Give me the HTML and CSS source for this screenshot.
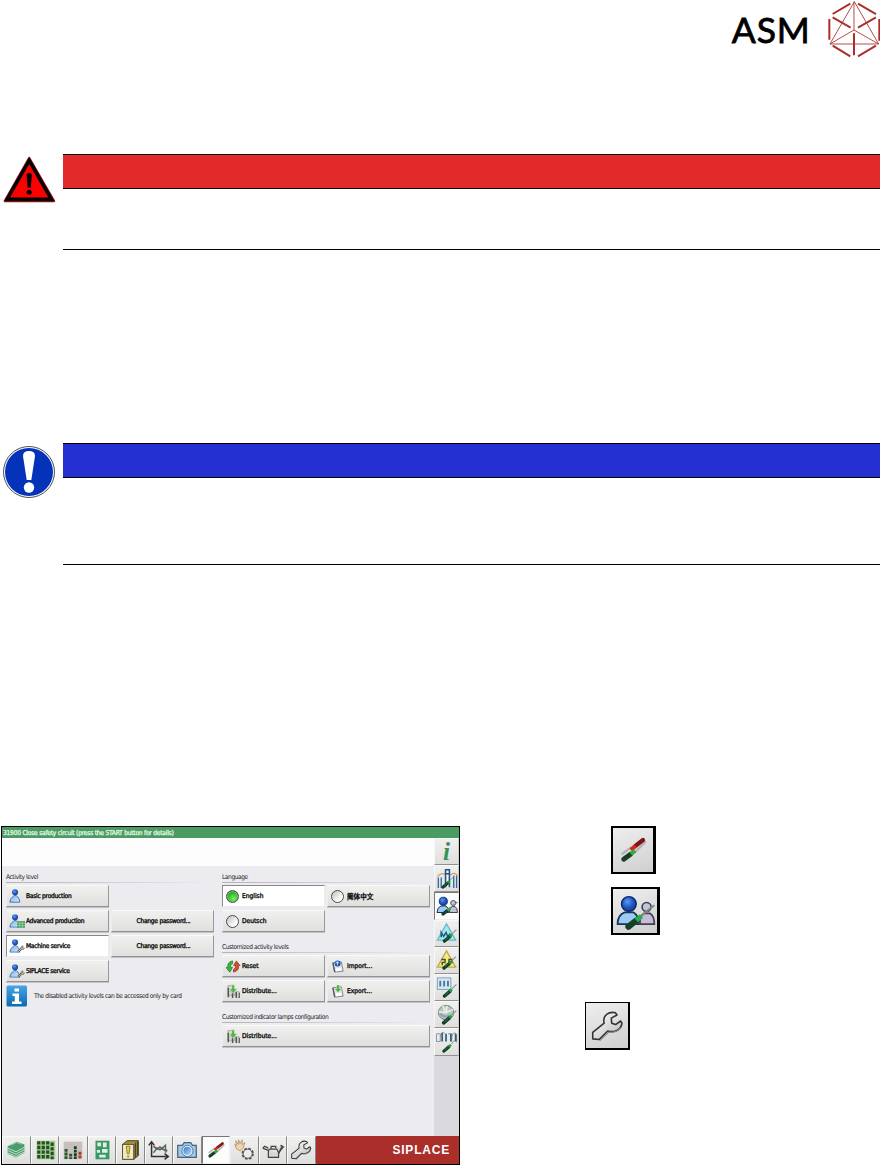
FILE: index.html
```html
<!DOCTYPE html>
<html lang="en">
<head>
    <meta charset="UTF-8">
    <meta name="viewport" content="width=device-width, initial-scale=1.0">
    <title>SIPLACE</title>
    <link rel="stylesheet" href="styles.css">
</head>
<body>
    <!-- shared icons -->
    <svg class="sprite">
        <defs>
            <radialGradient id="ball" cx=".4" cy=".35" r=".65"><stop offset="0" stop-color="#5c9cf5"/><stop offset=".5" stop-color="#2461cc"/><stop offset="1" stop-color="#153c82"/></radialGradient>
            <linearGradient id="coat" x1="0" y1="0" x2="1" y2="1"><stop offset="0" stop-color="#79aee3"/><stop offset="1" stop-color="#dceaff"/></linearGradient>
            <linearGradient id="lens" x1="0" y1="0" x2="1" y2="1"><stop offset="0" stop-color="#3a78c6"/><stop offset="1" stop-color="#b4dcff"/></linearGradient>
            <linearGradient id="blueBox" x1="0" y1="0" x2="0" y2="1"><stop offset="0" stop-color="#48a4e2"/><stop offset="1" stop-color="#096bb4"/></linearGradient>
            <linearGradient id="metal" x1="0" y1="0" x2="1" y2="1"><stop offset="0" stop-color="#fff"/><stop offset="1" stop-color="#b9b9b7"/></linearGradient>
        </defs>
        <symbol id="user" viewBox="0 0 14 12">
            <path d="M.8 11.4Q.8 8.5 3 7L4.5 5.5H6.3L7.8 7Q9.4 8.5 9.4 11.4Z" fill="url(#coat)" stroke="#356caf" stroke-width=".8"/>
            <circle cx="5.3" cy="2.8" r="2.6" fill="url(#ball)"/>
        </symbol>
        <symbol id="driver" viewBox="0 0 14 14">
            <path d="M9 5L13.3 .8" stroke="#8b8f90" stroke-width="1"/>
            <path d="M1.8 12L7 7.5" stroke="#123c26" stroke-width="3.3" stroke-linecap="round"/>
            <path d="M2.5 11L6 8" stroke="#2b694a" stroke-width="1"/>
            <path d="M6.8 7.6L9 5.5" stroke="#19a92f" stroke-width="2.4"/>
        </symbol>
        <symbol id="drivers" viewBox="0 0 28 28">
            <path d="M6 17L13 12M15 16L23 8" stroke="#b4b4b4" stroke-width="1.6"/>
            <path d="M15.5 11.3L21 7" stroke="#7e1515" stroke-width="3" stroke-linecap="round"/>
            <path d="M12.5 14L15.8 11" stroke="#d5251c" stroke-width="2.8"/>
            <path d="M7.5 20.5L12.5 16.8" stroke="#183f26" stroke-width="3.4" stroke-linecap="round"/>
            <path d="M12.5 16.8L15.5 14.5" stroke="#23b43d" stroke-width="2.8"/>
        </symbol>
        <symbol id="users" viewBox="0 0 24 24">
            <path d="M2 19Q2 14 6 12.5H11Q14 14.5 14 19Z" fill="#9bcbf5" stroke="#1b3654"/>
            <path d="M14.5 19Q14 14.5 17 13H20Q22.5 14.5 22.5 19Z" fill="#c6bddb" stroke="#454050"/>
            <circle cx="8.3" cy="7.8" r="4.1" fill="url(#ball)" stroke="#0b2770" stroke-width=".8"/>
            <circle cx="18.2" cy="9.5" r="2.5" fill="#c3c3dc" stroke="#3d4050" stroke-width=".9"/>
            <path d="M15 14.5L22.5 8.5" stroke="#798a85" stroke-width="1.2"/>
            <path d="M8 20.5L12.5 17" stroke="#154028" stroke-width="3.4" stroke-linecap="round"/>
            <path d="M12.5 17L15.3 14.5" stroke="#27ad44" stroke-width="2.7"/>
        </symbol>
        <symbol id="wrench" viewBox="0 0 28 28">
            <path d="M4 18.5L12 12Q11 8 14 5.7Q16.5 3.8 20 4.8L21 6.3L17 8.5L17.3 12L20 13L23.5 10.5L24.5 12Q24 16 20.5 17.3Q17.5 18.5 14.5 17.5L8.5 23.5L4 23Z" fill="url(#metal)" stroke="#333" stroke-width="1.1" stroke-linejoin="round"/>
            <path d="M9 24.2L15 18.4Q21 19 24 15" fill="none" stroke="#8a8a8a" stroke-width=".8"/>
        </symbol>
        <symbol id="spread" viewBox="0 0 16 16">
            <path d="M2 2L8 1L10 12H2Z" fill="#d9dfd6" stroke="#777" stroke-width=".6"/>
            <path d="M2.5 4V14M7 8V15M11 8V15M14 9V15" stroke="#555" stroke-width="1.6"/>
            <path d="M3 8H14M9 8V13M13 9V14" stroke="#b4b9bd" stroke-width="1.2"/>
            <path d="M6 1H9V5H12L7.6 10L3.5 5H6Z" fill="#58b349" stroke="#ddedd6" stroke-width=".6"/>
        </symbol>
        <symbol id="disk" viewBox="0 0 14 14">
            <path d="M2 3L11 2L13 12L4 13Z" fill="#dfe5ea" stroke="#65717b" stroke-width=".8"/>
            <path d="M2 3L4 13" stroke="#4d5962" stroke-width="1.4"/>
            <path d="M5 9L11 8.3V11L5.5 12Z" fill="#fff"/>
        </symbol>
        <symbol id="tinyWrench" viewBox="0 0 8 8">
            <path d="M1 7L4.5 3.7" stroke="#555" stroke-width="2.2"/>
            <path d="M4 4Q3.5 1.5 6 1L5.5 3L7.5 3.4Q6.5 5.6 4 4Z" fill="#ddd" stroke="#555" stroke-width=".7"/>
            <path d="M1.2 6.8L4.5 3.8" stroke="currentColor"/>
        </symbol>
    </svg>

    <header class="page-header">
        <span class="brand">ASM</span>
        <svg class="brand-mark" viewBox="320 0 160 180" fill="none" stroke="#aa2f2b">
            <path stroke-width="6" d="M337 42L390 11M413 11L467 42M327 57V119M477 57V122M337 137L390 169M413 169L467 137M401 100V166M337 52L391 83M413 83L467 52"/>
            <path stroke-width="2.6" d="M402 5L329 132H475ZM401 90V5M401 90L329 132M401 90L475 132"/>
        </svg>
    </header>

    <div class="notice warning">
        <svg class="notice-icon" viewBox="0 0 54 48">
            <path d="M26.2 3L51 46H1.8Z" fill="#000" stroke="#8d0d13" stroke-width="2.4" stroke-linejoin="round"/>
            <path d="M26.2 3.2L50.3 45.4H2.2Z" fill="#000" stroke="#000" stroke-linejoin="round"/>
            <path d="M26.2 9L45.3 42.6H7.1Z" fill="#f00"/>
            <path d="M23.5 19.5Q26.2 16 28.9 19.5L27.8 32.8H24.6Z"/><circle cx="26.2" cy="37.2" r="2.5"/>
        </svg>
        <div class="notice-body">
            <div class="notice-bar"></div>
        </div>
    </div>

    <div class="notice mandatory">
        <svg class="notice-icon" viewBox="0 0 54 54">
            <circle cx="26" cy="27" r="25.5" fill="#fff" stroke="#343c48" stroke-width=".9"/>
            <circle cx="26" cy="27" r="24" fill="#0432b8"/>
            <path d="M20 11Q20 6 26 6Q32 6 32 11L28.3 35H23.7Z" fill="#fff"/><circle cx="26" cy="42.5" r="5.2" fill="#fff"/>
        </svg>
        <div class="notice-body">
            <div class="notice-bar"></div>
        </div>
    </div>

    <div class="station-row">
        <div class="screen">
            <div class="status"><span>31900 Close safety circuit (press the START button for details)</span></div>
            <div class="middle">
                <div class="main">
                    <div class="message"></div>
                    <div class="columns">
                        <div class="group">
                            <h3>Activity level</h3>
                            <div class="grid levels">
                                <button><svg class="ico"><use href="#user"/></svg><span>Basic production</span></button>
                                <div></div>
                                <button><svg class="ico" viewBox="0 0 14 12"><use href="#user"/><path d="M7 6H14V12H7Z" fill="#54a26b"/><path d="M7 8H14M7 10H14M9.3 6V12M11.7 6V12" stroke="#a4d9af" stroke-width=".5"/></svg><span>Advanced production</span></button>
                                <button class="center"><span>Change password...</span></button>
                                <button class="pressed"><svg class="ico" viewBox="0 0 14 12"><use href="#user"/><use class="grey-tool" href="#tinyWrench" x="7" y="5" width="7" height="7"/></svg><span>Machine service</span></button>
                                <button class="center"><span>Change password...</span></button>
                                <button><svg class="ico" viewBox="0 0 14 12"><use href="#user"/><use class="gold-tool" href="#tinyWrench" x="7" y="5" width="7" height="7"/></svg><span>SIPLACE service</span></button>
                            </div>
                            <div class="hint">
                                <svg viewBox="0 0 22 22">
                                    <rect x=".5" y=".5" width="20.5" height="21" rx="1.5" fill="url(#blueBox)"/>
                                    <path d="M8.5 3.5H13V6.5H8.5ZM6.5 8.5H13V16.5H15.5V19H6V16.5H8.8V11H6.5Z" fill="#fff"/>
                                </svg>
                                <span>The disabled activity levels can be accessed only by card</span>
                            </div>
                        </div>
                        <div class="group">
                            <h3>Language</h3>
                            <div class="grid">
                                <button class="pressed"><i class="radio on"></i><span>English</span></button>
                                <button><i class="radio"></i><span class="cjk">简体中文</span></button>
                                <button><i class="radio"></i><span>Deutsch</span></button>
                            </div>
                            <h3>Customized activity levels</h3>
                            <div class="grid">
                                <button><svg class="tool" viewBox="0 0 16 14"><path d="M7 1Q1 2 2 8L0 8L4 13L7 8H5Q4 5 7 4Z" fill="#35b83b" stroke="#196a1f" stroke-width=".7"/><path d="M8 13Q15 11 13 6L15 6L11 1L8 6H10Q11 9 8 10Z" fill="#d94a31" stroke="#80301e" stroke-width=".7"/></svg><span>Reset</span></button>
                                <button><svg class="tool" viewBox="0 0 16 14"><use href="#disk" width="14" height="14"/><circle cx="7" cy="3.7" r="3.2" fill="url(#ball)"/><path d="M7 6V2M5.5 3.5L7 2L8.5 3.5" stroke="#fff" fill="none" stroke-width=".7"/></svg><span>Import...</span></button>
                                <button><svg class="tool"><use href="#spread"/></svg><span>Distribute...</span></button>
                                <button><svg class="tool" viewBox="0 0 16 14"><use href="#disk" width="14" height="14"/><path d="M6 0H9V4H11.5L7.5 8L3.5 4H6Z" fill="#54ad45" stroke="#efe" stroke-width=".4"/></svg><span>Export...</span></button>
                            </div>
                            <h3>Customized indicator lamps configuration</h3>
                            <div class="grid">
                                <button class="wide"><svg class="tool"><use href="#spread"/></svg><span>Distribute...</span></button>
                            </div>
                        </div>
                    </div>
                </div>

                <nav class="side">
                    <button class="info">i</button>
                    <button><svg viewBox="0 0 24 26"><path d="M3 23V12M6 23V12M19 23V10M22 23V10" stroke="#36699c" stroke-width="1.4"/><path d="M2 11Q6 6 11 9H16Q20 6 23 10" fill="none" stroke="#d2a266" stroke-width="1.3"/><path d="M10.5 22V4H14.5V22M10.5 8H14.5" fill="#f3f7f7" stroke="#204e85" stroke-width="1.6"/><use href="#driver" x="6" y="10" width="14" height="14"/></svg></button>
                    <button class="pressed"><svg viewBox="0 0 24 24"><use href="#users"/></svg></button>
                    <button><svg viewBox="0 0 24 26"><path d="M11.5 3L21 20H2Z" fill="#a9e5f0" stroke="#64bbd1" stroke-width="1.3"/><path d="M6 17V12L8.5 16L11 12L13 17L15 13" fill="none" stroke="#1b5c79" stroke-width="1.6"/><use href="#driver" x="7" y="8" width="16" height="15"/></svg></button>
                    <button><svg viewBox="0 0 24 26"><path d="M11.5 3L21 20H2Z" fill="#f5e887" stroke="#baab44" stroke-width="1.3"/><path d="M6 12H10V15H7V18M14 18V12H17V15H14" fill="none" stroke="#534d29" stroke-width="1.5"/><use href="#driver" x="6" y="8" width="17" height="15"/></svg></button>
                    <button><svg viewBox="0 0 24 26"><path d="M2 3H16V15H2Z" fill="#d6e9f4" stroke="#7f9eb4"/><path d="M5 6V12M9 6V12M13 6V12" stroke="#477e9f" stroke-width="2"/><use href="#driver" x="7" y="9" width="16" height="15"/></svg></button>
                    <button><svg viewBox="0 0 24 26"><ellipse cx="11" cy="11" rx="8" ry="7.5" fill="#b8c0c2" stroke="#7a8484"/><path d="M3.5 10L10 11L8 4M12 4L11 11L18 8" fill="none" stroke="#e7ecdc" stroke-width="2"/><path d="M5 12Q9 17 15 14" fill="none" stroke="#88a3b1" stroke-width="2"/><use href="#driver" x="6" y="8" width="17" height="16"/></svg></button>
                    <button><svg viewBox="0 0 24 26"><path d="M1 5H5V13H1ZM5 8Q7 1 10 5M13 5H17V13M17 8Q19 1 22 6V14" fill="none" stroke="#8b9395"/><path d="M7 4V13M11 5V13M16 5V13M21 5V13" stroke="#345f80" stroke-width="1.8"/><use href="#driver" x="6" y="11" width="16" height="14"/></svg></button>
                </nav>
            </div>

            <footer class="toolbar">
                <button><svg viewBox="0 0 28 28"><path d="M5 10L15 5L23 8L14 13ZM5 10V18L14 22L23 17V8L14 13Z" fill="#4b9b6c"/><path d="M5 12L14 16L23 11M5 14.5L14 18.5L23 13.5M5 17L14 21L23 16" fill="none" stroke="#c6e8cf"/><path d="M8 9L15 6L20 8" fill="none" stroke="#8dccaa"/></svg></button>
                <button><svg viewBox="0 0 28 28"><rect x="5" y="4" width="20" height="20" fill="#a9c98c"/><path d="M7.3 4.5V24M12.1 4.5V24M16.9 4.5V24M21.7 6V24" stroke="#1d5226" stroke-width="3.4" stroke-dasharray="3.6 1.4"/></svg></button>
                <button><svg viewBox="0 0 28 28"><rect x="4" y="5" width="20" height="19" fill="#c6bfbb"/><path d="M6.5 13V23.6M11.5 18V23.6" stroke="#26552d" stroke-width="3.2" stroke-dasharray="3 .8"/><path d="M16.5 10V23.6" stroke="#123e1b" stroke-width="3" stroke-dasharray="3 .8"/><path d="M21.5 16V23.6" stroke="#a63c27" stroke-width="3.2" stroke-dasharray="3 .8"/></svg></button>
                <button><svg viewBox="0 0 28 28"><rect x="7" y="4" width="15" height="20" fill="#39976a"/><path d="M9 6H13V10H9ZM15 6H19V11H15ZM8.5 14H12V17H8.5ZM14 13H20V17H14ZM11 19H18V22H11Z" fill="#def2dc"/></svg></button>
                <button><svg viewBox="0 0 28 28"><path d="M6 8L11 4H23V20L18 24H6Z" fill="#a98a2c" stroke="#3c3825"/><path d="M18 8V24M20 6V22M22 5V20" stroke="#39382e"/><rect x="6" y="8" width="12" height="16" fill="#eee8c4" stroke="#59513a"/><path d="M10 10H14L13 18H11Z" fill="#e7d630" stroke="#57522c" stroke-width=".7"/><circle cx="12" cy="21" r="1.5" fill="#ccb524"/></svg></button>
                <button><svg viewBox="0 0 28 28" fill="none"><path d="M6 6V21H23M20 18L24 21L20 24M3 9L6 5L9 9" stroke="#303238" stroke-width="1.6"/><path d="M8 10L12 13L15 11L18 13L23 15" stroke="#8c5378" stroke-width="2"/><path d="M8 17L12 12L15 14L21 9V17" stroke="#397255" stroke-width="1.5"/></svg></button>
                <button><svg viewBox="0 0 28 28"><path d="M4 9H9L11 6H18L20 9H24V22H4Z" fill="#a3c9e9" stroke="#48627e" stroke-width="1.3"/><circle cx="14.5" cy="15" r="6" fill="#eef7ff" stroke="#49739c"/><circle cx="14.5" cy="15" r="4.4" fill="url(#lens)"/></svg></button>
                <button class="pressed"><svg viewBox="0 0 28 28"><use href="#drivers"/></svg></button>
                <button class="flat"><svg viewBox="0 0 28 28"><path d="M6 13L4 8L6 9L5 4L8 8L8 3L10 7L12 3V8L15 6L13 12L10 15Z" fill="#f2d3a7" stroke="#a38862" stroke-width=".8"/><circle cx="18" cy="18" r="5.6" fill="#ddd" stroke="#4b4b49" stroke-width="2" stroke-dasharray="2.6 1.8"/><circle cx="18" cy="18" r="4.9" fill="#ececea" stroke="#4c4c4c"/></svg></button>
                <button><svg viewBox="0 0 28 28"><path d="M3 12L9 14.5V22H20V17L25 11M9 14.5L11 13H18L20 17" fill="#d7d7d1" stroke="#42423f" stroke-width="1.3"/><path d="M3 12L5 10L9 12M12 13V10H17V12M20 18L24 9M22 9L26 11" fill="none" stroke="#454541" stroke-width="1.3"/></svg></button>
                <button><svg viewBox="0 0 28 28"><use href="#wrench"/></svg></button>
                <div class="product"><span>SIPLACE</span></div>
            </footer>
        </div>

        <div class="keys">
            <div class="key"><svg viewBox="0 0 28 28"><use href="#drivers"/></svg></div>
            <div class="key key-users"><svg viewBox="0 0 24 24"><use href="#users"/></svg></div>
            <div class="key key-wrench"><svg viewBox="0 0 28 28"><use href="#wrench"/></svg></div>
        </div>
    </div>
</body>
</html>
```

FILE: styles.css
```css
* {
    box-sizing: border-box;
}

body {
    margin: 0;
    width: 880px;
    height: 1165px;
    overflow: hidden;
    background: #fff;
    font-family: "DejaVu Sans Condensed", "DejaVu Sans", sans-serif;
}

svg {
    display: block;
    flex: none;
}

.sprite {
    width: 0;
    height: 0;
    float: left;
}

.page-header {
    display: flex;
    justify-content: flex-end;
    height: 154px;
}

.brand {
    width: 95px;
    padding-top: 9px;
    font: 35.5px/42px Lato, sans-serif;
    letter-spacing: .9px;
    -webkit-text-stroke: .8px #000;
}

.brand-mark {
    width: 53.3px;
    height: 60px;
}

.notice {
    display: grid;
    grid-template-columns: 63px 1fr;
}

.notice-icon {
    width: 54px;
    margin-left: 3px;
    margin-top: 1px;
}

.notice-body {
    height: 96px;
    border-top: 1px solid #000;
    border-bottom: 1px solid #000;
}

.notice-bar {
    height: 34px;
    background: #e32a2a;
    border-bottom: 1px solid #000;
}

.warning {
    height: 289px;
}

.mandatory {
    height: 383px;
}

.mandatory .notice-icon {
    margin-top: 2px;
}

.mandatory .notice-body {
    height: 122px;
}

.mandatory .notice-bar {
    background: #2430d2;
}

.station-row {
    display: flex;
    height: 339px;
    padding-left: 1px;
}

.screen {
    display: flex;
    flex-direction: column;
    width: 459px;
    height: 339px;
    border: 1px solid #000;
    background: #ececf0;
    color: #1c1c1c;
    font-size: 6.6px;
}

.status {
    height: 11px;
    padding-left: 1px;
    background: #4a9c62;
    color: #e6f6e8;
    line-height: 12px;
    white-space: nowrap;
    letter-spacing: -.22px;
    -webkit-text-stroke: .3px #e0f2e2;
}

.middle {
    display: flex;
    height: 298px;
}

.main {
    width: 432px;
}

.message {
    height: 28px;
    background: #fdfdfd;
}

.columns {
    display: grid;
    grid-template-columns: 208px 208px;
    gap: 8px;
    padding: 5px 4px 0;
}

.group h3 {
    height: 12px;
    margin: 0 0 2px;
    background: linear-gradient(90deg, #b3b3b7, #ececf0) bottom / 100% 1px no-repeat;
    font-size: 6.6px;
    font-weight: normal;
    line-height: 12px;
    letter-spacing: -.44px;
    white-space: nowrap;
}

.grid {
    display: grid;
    grid-template-columns: 103px 103px;
    grid-auto-rows: 22px;
    gap: 3px 2px;
}

.grid + h3 {
    margin-top: 9px;
}

button {
    display: flex;
    align-items: center;
    min-width: 0;
    margin: 0;
    padding: 0;
    border: 1px solid;
    border-color: #f9f9f9 #98989a #929294 #eee;
    background: linear-gradient(#f0f0ef, #dfdfde);
    color: #111;
    font: inherit;
}

.grid button {
    padding-left: 2px;
    border-right-width: 1.5px;
    box-shadow: 0 1px 0 #c3c3c5;
    white-space: nowrap;
    -webkit-text-stroke: .35px #111;
}

.levels button {
    letter-spacing: -.25px;
}

.grid .pressed {
    background: #fff;
    border-color: #888 #eee #eee #8c8c8c;
    box-shadow: none;
}

.grid .center {
    justify-content: center;
}

.wide {
    grid-column: span 2;
}

.ico {
    width: 16px;
    height: 14px;
    margin-right: 1px;
    -webkit-text-stroke: 0;
}

.tool {
    width: 15px;
    height: 15px;
    margin: 0 1px;
}

.grey-tool {
    color: #ccc;
}

.gold-tool {
    color: #d9b34c;
}

.radio {
    width: 13px;
    height: 13px;
    margin: 0 3px 0 1px;
    border: 1px solid #4c4c4c;
    border-radius: 50%;
    background: linear-gradient(135deg, #bebebe, #fff 75%);
}

.radio.on {
    background: radial-gradient(circle at 60% 70%, #72f84e, #15a41c 75%);
    box-shadow: inset 0 0 0 1px #7dbd79;
}

.cjk {
    font-family: "Noto Sans CJK SC", sans-serif;
    font-weight: 500;
}

.hint {
    display: flex;
    align-items: center;
    gap: 6px;
    margin-top: 3px;
    letter-spacing: -.4px;
    white-space: nowrap;
}

.hint svg {
    width: 22px;
    height: 22px;
}

.side {
    width: 25px;
    background: #dadade;
}

.side button {
    width: 25px;
    height: 27.2px;
    justify-content: center;
    border-color: #f8f8f8 #ccc #929294 #f7f7f7;
}

.side svg {
    width: 24px;
    height: 25px;
}

.side .pressed,
.toolbar .pressed {
    background: #fcfcfc;
    border-color: #777 #eee #eee #777;
}

.side .info {
    color: #35925a;
    font: italic bold 25px/24px "Liberation Serif", serif;
}

.toolbar {
    display: flex;
    height: 28px;
}

.toolbar button {
    flex: 0 0 28.55px;
    border-color: #f9f9f9 #888 #ddd #f9f9f9;
}

.toolbar .flat {
    border-left-color: #eee;
}

.toolbar svg {
    width: 26px;
    height: 26px;
}

.product {
    flex: 1;
    padding-right: 9px;
    background: #aa2e2a;
    color: #fff;
    font: bold 12px/28px "Liberation Sans", sans-serif;
    letter-spacing: .8px;
    text-align: right;
}

.keys {
    padding-left: 151px;
}

.key {
    display: flex;
    align-items: center;
    justify-content: center;
    width: 45px;
    height: 48px;
    border: 2px solid #000;
    border-right-width: 3px;
    background: linear-gradient(160deg, #eee, #cfcfcf);
}

.key svg {
    width: 40px;
    height: 40px;
}

.key-users {
    width: 49px;
    margin-top: 13px;
}

.key-users svg {
    width: 43px;
    height: 43px;
}

.key-wrench {
    margin: 67px 0 0 -26px;
    border-width: 1px 2px 2px 1px;
}
```
